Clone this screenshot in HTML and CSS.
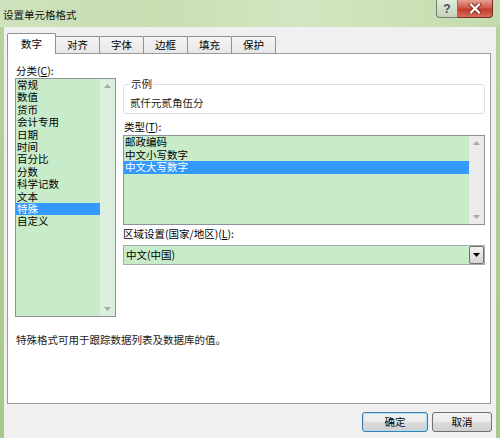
FILE: index.html
```html
<!DOCTYPE html>
<html lang="zh-CN">
<head>
<meta charset="utf-8">
<title>设置单元格格式</title>
<link rel="stylesheet" href="styles.css">
</head>
<body>
<div class="window">
  <div class="titlebar">
    <span class="title">设置单元格格式</span>
    <div class="caption">
      <div class="cbtn help">?</div>
      <div class="cbtn close">
        <svg width="14" height="11" viewBox="0 0 14 11"><path d="M3 1.5 L11 9.5 M11 1.5 L3 9.5" stroke="#8a2a20" stroke-width="4" stroke-linecap="square"/><path d="M3 1.5 L11 9.5 M11 1.5 L3 9.5" stroke="#ffffff" stroke-width="2.2" stroke-linecap="square"/></svg>
      </div>
    </div>
  </div>
  <div class="client">
    <div class="tabs">
      <div class="tab active">数字</div>
      <div class="tab">对齐</div>
      <div class="tab">字体</div>
      <div class="tab">边框</div>
      <div class="tab">填充</div>
      <div class="tab">保护</div>
    </div>
    <div class="panel">
      <div class="cols">
        <div class="left">
          <div class="label">分类(<u>C</u>):</div>
          <div class="listbox cat">
            <ul class="items">
              <li>常规</li>
              <li>数值</li>
              <li>货币</li>
              <li>会计专用</li>
              <li>日期</li>
              <li>时间</li>
              <li>百分比</li>
              <li>分数</li>
              <li>科学记数</li>
              <li>文本</li>
              <li class="sel">特殊</li>
              <li>自定义</li>
            </ul>
            <div class="scroll green">
              <svg width="7" height="4" viewBox="0 0 7 4"><polygon points="0,4 3.5,0 7,4" fill="#a8a8a8"/></svg>
              <svg width="7" height="4" viewBox="0 0 7 4"><polygon points="0,0 3.5,4 7,0" fill="#a8a8a8"/></svg>
            </div>
          </div>
        </div>
        <div class="right">
          <fieldset class="group">
            <legend>示例</legend>
            <div class="sample">贰仟元贰角伍分</div>
          </fieldset>
          <div class="label type-label">类型(<u>T</u>):</div>
          <div class="listbox type">
            <ul class="items">
              <li>邮政编码</li>
              <li>中文小写数字</li>
              <li class="sel">中文大写数字</li>
            </ul>
            <div class="scroll">
              <svg width="7" height="4" viewBox="0 0 7 4"><polygon points="0,4 3.5,0 7,4" fill="#a8a8a8"/></svg>
              <svg width="7" height="4" viewBox="0 0 7 4"><polygon points="0,0 3.5,4 7,0" fill="#a8a8a8"/></svg>
            </div>
          </div>
          <div class="label locale-label">区域设置(国家/地区)(<u>L</u>):</div>
          <div class="combo">
            <span class="combo-text">中文(中国)</span>
            <div class="drop">
              <svg width="7" height="4" viewBox="0 0 7 4"><polygon points="0,0 3.5,4 7,0" fill="#000"/></svg>
            </div>
          </div>
        </div>
      </div>
      <p class="desc">特殊格式可用于跟踪数据列表及数据库的值。</p>
    </div>
    <div class="buttons">
      <button class="btn default">确定</button>
      <button class="btn cancel">取消</button>
    </div>
  </div>
</div>
</body>
</html>
```
FILE: styles.css
```css
* { box-sizing: border-box; }
html, body { margin: 0; padding: 0; }
body {
  font-family: "Noto Sans CJK SC", "Liberation Sans", sans-serif;
  font-size: 10.5px;
  color: #000;
  background: #fff;
}
.window {
  width: 500px;
  height: 438px;
  display: flex;
  flex-direction: column;
  background: linear-gradient(to bottom, #b7d39e, #a6c88b);
  overflow: hidden;
}
.titlebar {
  height: 27px;
  flex: none;
  display: flex;
  justify-content: space-between;
  align-items: flex-start;
  background: linear-gradient(to right, #cfe2bd 0%, #c7ddb2 30%, #d3e6c2 60%, #c3dbac 100%);
}
.title {
  margin: 8px 0 0 3px;
  line-height: 14px;
  color: #111;
}
.caption {
  display: flex;
  margin-right: 7px;
}
.cbtn {
  height: 18px;
  display: flex;
  align-items: center;
  justify-content: center;
  border: 1px solid #6f7f68;
  border-top: none;
}
.help {
  width: 22px;
  border-radius: 0 0 0 4px;
  background: linear-gradient(to bottom, #e2ecda, #c5d3bc);
  color: #3d4f63;
  font-family: "Liberation Sans", sans-serif;
  font-weight: bold;
  font-size: 12px;
}
.close {
  width: 35px;
  border-left: none;
  border-color: #7a2b22;
  border-radius: 0 0 4px 0;
  background: linear-gradient(to bottom, #e5a195, #cf5a47 45%, #c13a27 55%, #d7705c);
}
.client {
  flex: 1;
  margin: 0 4px;
  background: #f0f0f0;
  padding: 6px 4px 0 3px;
}
.tabs {
  display: flex;
  align-items: flex-end;
  height: 20px;
  position: relative;
  z-index: 1;
}
.tab {
  height: 17px;
  padding: 0 11px;
  margin-left: -1px;
  display: flex;
  align-items: center;
  line-height: 14px;
  border: 1px solid #8e9196;
  border-bottom: none;
  background: linear-gradient(to bottom, #f6f6f6, #e6e6e6);
  border-radius: 2px 2px 0 0;
}
.tab.active {
  height: 21px;
  margin-left: 0;
  margin-bottom: -1px;
  padding: 0 13px 1px;
  background: #fff;
  position: relative;
  z-index: 2;
}
.tab.active + .tab { margin-left: -1px; }
.panel {
  width: 484px;
  height: 351px;
  border: 1px solid #9a9a9a;
  background: #fff;
  padding: 9px 5px 0 7px;
}
.cols {
  display: grid;
  grid-template-columns: 101px 362px;
  column-gap: 7px;
  align-items: start;
}
.label {
  line-height: 15px;
  height: 15px;
  padding-left: 1px;
}
.listbox {
  border: 1px solid #8e9399;
  background: #c8ecca;
  display: flex;
}
.listbox.cat { height: 239px; }
.listbox.type { height: 90px; margin-top: 0; }
.items {
  list-style: none;
  margin: 0;
  padding: 0;
  flex: 1;
}
.cat .items li {
  height: 12.4px;
  line-height: 12.4px;
  padding-left: 1px;
  white-space: nowrap;
}
.type .items li {
  height: 12.5px;
  line-height: 12.5px;
  padding-left: 1px;
  white-space: nowrap;
}
.items li.sel {
  background: #3399ff;
  color: #fff;
}
.scroll {
  width: 15px;
  flex: none;
  display: flex;
  flex-direction: column;
  justify-content: space-between;
  align-items: center;
  padding: 5px 0 5px;
  background: #ebebeb;
}
.scroll.green { background: #dceedd; }
.group {
  margin: 14px 0 0;
  padding: 5px 6px 3px;
  border: 1px solid #d9dee2;
  border-radius: 3px;
  min-width: 0;
}
.group legend {
  padding: 0 1px;
  line-height: 14px;
  color: #222;
}
.sample {
  line-height: 14px;
  color: #222;
}
.type-label {
  margin-top: 6px;
  line-height: 14px;
  height: 15px;
}
.locale-label {
  margin-top: 2px;
  line-height: 14px;
  height: 14px;
  padding-left: 0;
}
.combo {
  margin-top: 4px;
  height: 20px;
  border: 1px solid #a9a9a9;
  background: #c8ecca;
  display: flex;
  align-items: center;
  justify-content: space-between;
}
.combo-text {
  padding-left: 2px;
  line-height: 14px;
}
.drop {
  width: 15px;
  height: 18px;
  margin-right: 0;
  border: 1px solid #707070;
  border-radius: 2px;
  background: linear-gradient(to bottom, #f2f2f2, #d6d6d6);
  display: flex;
  align-items: center;
  justify-content: center;
}
.desc {
  margin: 16px 0 0 1px;
  line-height: 14px;
  color: #222;
}
.buttons {
  display: flex;
  justify-content: flex-end;
  gap: 4px;
  margin-top: 8px;
}
.btn {
  height: 20px;
  font-family: inherit;
  font-size: 10.5px;
  line-height: 14px;
  padding: 0;
  border-radius: 3px;
  color: #000;
}
.btn.default {
  width: 66px;
  border: 1px solid #3c7fb1;
  box-shadow: inset 0 0 0 1px #a9dcf5;
  background: linear-gradient(to bottom, #f2f2f2 0%, #ebebeb 50%, #dddddd 51%, #cfcfcf 100%);
}
.btn.cancel {
  width: 60px;
  border: 1px solid #707070;
  background: linear-gradient(to bottom, #f2f2f2 0%, #ebebeb 50%, #dddddd 51%, #cfcfcf 100%);
}
```
